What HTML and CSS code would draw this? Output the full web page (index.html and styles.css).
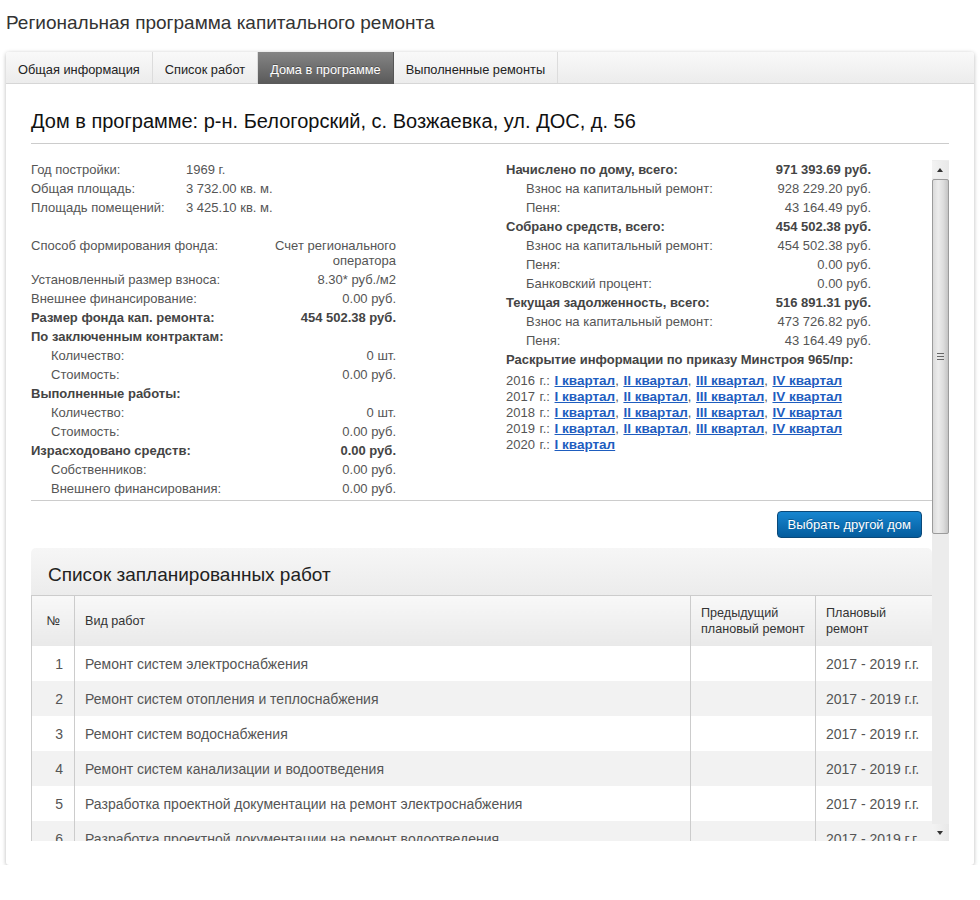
FILE: index.html
```html
<!DOCTYPE html>
<html lang="ru">
<head>
<meta charset="utf-8">
<title>Региональная программа капитального ремонта</title>
<link rel="stylesheet" href="styles.css">
</head>
<body>
<h1 class="page-title">Региональная программа капитального ремонта</h1>
<div class="card">
  <ul class="tabs">
    <li>Общая информация</li>
    <li>Список работ</li>
    <li class="active">Дома в программе</li>
    <li>Выполненные ремонты</li>
  </ul>
  <div class="card-body">
    <h2 class="house-title">Дом в программе: р-н. Белогорский, с. Возжаевка, ул. ДОС, д. 56</h2>
    <div class="scroll-box">
      <div class="scroll-content">
        <div class="info-grid">
          <div class="info-col">
            <table class="kv kv-basic">
              <tr><td class="lbl">Год постройки:</td><td>1969 г.</td></tr>
              <tr><td class="lbl">Общая площадь:</td><td>3 732.00 кв. м.</td></tr>
              <tr><td class="lbl">Площадь помещений:</td><td>3 425.10 кв. м.</td></tr>
            </table>
            <table class="kv kv-fund">
              <tr><td class="lbl">Способ формирования фонда:</td><td class="val">Счет регионального оператора</td></tr>
              <tr><td class="lbl">Установленный размер взноса:</td><td class="val">8.30* руб./м2</td></tr>
              <tr><td class="lbl">Внешнее финансирование:</td><td class="val">0.00 руб.</td></tr>
              <tr class="strong"><td class="lbl">Размер фонда кап. ремонта:</td><td class="val">454 502.38 руб.</td></tr>
              <tr class="strong"><td class="lbl" colspan="2">По заключенным контрактам:</td></tr>
              <tr><td class="lbl sub">Количество:</td><td class="val">0 шт.</td></tr>
              <tr><td class="lbl sub">Стоимость:</td><td class="val">0.00 руб.</td></tr>
              <tr class="strong"><td class="lbl" colspan="2">Выполненные работы:</td></tr>
              <tr><td class="lbl sub">Количество:</td><td class="val">0 шт.</td></tr>
              <tr><td class="lbl sub">Стоимость:</td><td class="val">0.00 руб.</td></tr>
              <tr class="strong"><td class="lbl">Израсходовано средств:</td><td class="val">0.00 руб.</td></tr>
              <tr><td class="lbl sub">Собственников:</td><td class="val">0.00 руб.</td></tr>
              <tr><td class="lbl sub">Внешнего финансирования:</td><td class="val">0.00 руб.</td></tr>
            </table>
          </div>
          <div class="info-col">
            <table class="kv kv-money">
              <tr class="strong"><td class="lbl">Начислено по дому, всего:</td><td class="val">971 393.69 руб.</td></tr>
              <tr><td class="lbl sub">Взнос на капитальный ремонт:</td><td class="val">928 229.20 руб.</td></tr>
              <tr><td class="lbl sub">Пеня:</td><td class="val">43 164.49 руб.</td></tr>
              <tr class="strong"><td class="lbl">Собрано средств, всего:</td><td class="val">454 502.38 руб.</td></tr>
              <tr><td class="lbl sub">Взнос на капитальный ремонт:</td><td class="val">454 502.38 руб.</td></tr>
              <tr><td class="lbl sub">Пеня:</td><td class="val">0.00 руб.</td></tr>
              <tr><td class="lbl sub">Банковский процент:</td><td class="val">0.00 руб.</td></tr>
              <tr class="strong"><td class="lbl">Текущая задолженность, всего:</td><td class="val">516 891.31 руб.</td></tr>
              <tr><td class="lbl sub">Взнос на капитальный ремонт:</td><td class="val">473 726.82 руб.</td></tr>
              <tr><td class="lbl sub">Пеня:</td><td class="val">43 164.49 руб.</td></tr>
            </table>
            <div class="disclosure-title">Раскрытие информации по приказу Минстроя 965/пр:</div>
            <div class="disclosure">
              <div>2016 г.: <a href="#">I квартал</a>, <a href="#">II квартал</a>, <a href="#">III квартал</a>, <a href="#">IV квартал</a></div>
              <div>2017 г.: <a href="#">I квартал</a>, <a href="#">II квартал</a>, <a href="#">III квартал</a>, <a href="#">IV квартал</a></div>
              <div>2018 г.: <a href="#">I квартал</a>, <a href="#">II квартал</a>, <a href="#">III квартал</a>, <a href="#">IV квартал</a></div>
              <div>2019 г.: <a href="#">I квартал</a>, <a href="#">II квартал</a>, <a href="#">III квартал</a>, <a href="#">IV квартал</a></div>
              <div>2020 г.: <a href="#">I квартал</a></div>
            </div>
          </div>
        </div>
        <div class="actions"><button class="btn-primary" type="button">Выбрать другой дом</button></div>
        <div class="panel">
          <div class="panel-head">Список запланированных работ</div>
          <table class="works">
            <colgroup><col class="c-num"><col class="c-name"><col class="c-prev"><col class="c-plan"></colgroup>
            <thead>
              <tr><th class="num">№</th><th>Вид работ</th><th>Предыдущий плановый ремонт</th><th>Плановый ремонт</th></tr>
            </thead>
            <tbody>
              <tr><td class="num">1</td><td>Ремонт систем электроснабжения</td><td></td><td>2017 - 2019 г.г.</td></tr>
              <tr><td class="num">2</td><td>Ремонт систем отопления и теплоснабжения</td><td></td><td>2017 - 2019 г.г.</td></tr>
              <tr><td class="num">3</td><td>Ремонт систем водоснабжения</td><td></td><td>2017 - 2019 г.г.</td></tr>
              <tr><td class="num">4</td><td>Ремонт систем канализации и водоотведения</td><td></td><td>2017 - 2019 г.г.</td></tr>
              <tr><td class="num">5</td><td>Разработка проектной документации на ремонт электроснабжения</td><td></td><td>2017 - 2019 г.г.</td></tr>
              <tr><td class="num">6</td><td>Разработка проектной документации на ремонт водоотведения</td><td></td><td>2017 - 2019 г.г.</td></tr>
              <tr><td class="num">7</td><td>Разработка проектной документации на ремонт теплоснабжения</td><td></td><td>2017 - 2019 г.г.</td></tr>
            </tbody>
          </table>
        </div>
      </div>
      <div class="scrollbar">
        <div class="sb-btn sb-up"></div>
        <div class="sb-track">
          <div class="sb-thumb"><span class="sb-grip"></span></div>
        </div>
        <div class="sb-btn sb-down"></div>
      </div>
    </div>
  </div>
</div>
</body>
</html>
```

FILE: styles.css
```css
* { box-sizing: border-box; }

html, body { background: #ffffff; }

body {
  margin: 0;
  padding: 0 6px;
  font-family: "Liberation Sans", Arial, Helvetica, sans-serif;
  color: #444;
  font-size: 13px;
}

.page-title {
  margin: 12px 0 18px;
  font-size: 19px;
  line-height: 22px;
  font-weight: normal;
  color: #333;
}

.card {
  width: 968px;
  background: #fff;
  border-radius: 3px;
  box-shadow: 0 1px 4px rgba(0, 0, 0, 0.28);
}

.tabs {
  display: flex;
  margin: 0;
  padding: 0;
  list-style: none;
  height: 32px;
  background: linear-gradient(#f9f9f9, #ececec);
  border-bottom: 1px solid #d6d6d6;
  border-radius: 3px 3px 0 0;
}

.tabs li {
  padding: 4px 12px 0;
  line-height: 27px;
  font-size: 12.8px;
  color: #222;
  border-right: 1px solid #dcdcdc;
}

.tabs li.active {
  background: linear-gradient(#858585, #595959);
  color: #fff;
  border-right-color: #555;
  text-shadow: 0 -1px 0 rgba(0, 0, 0, 0.3);
  height: 32px;
}

.card-body {
  padding: 25px 25px 24px;
}

.house-title {
  margin: 0;
  padding-bottom: 10px;
  border-bottom: 1px solid #cccccc;
  font-size: 20px;
  line-height: 24px;
  font-weight: normal;
  color: #111;
}

.scroll-box {
  display: flex;
  margin-top: 16px;
  height: 681px;
}

.scroll-content {
  flex: 1;
  overflow: hidden;
}

.info-grid {
  display: grid;
  grid-template-columns: 475px 1fr;
  padding-bottom: 2px;
  border-bottom: 1px solid #cccccc;
}

.kv {
  border-collapse: collapse;
  width: 365px;
  table-layout: fixed;
}

.kv td {
  padding: 2px 0;
  line-height: 15px;
  font-size: 13px;
  color: #555;
  vertical-align: top;
}

.kv .val { text-align: right; }
.kv .sub { padding-left: 20px; }

.kv tr.strong td {
  font-weight: bold;
  color: #444;
}

.kv-basic { margin-bottom: 19px; }
.kv-basic td.lbl { width: 155px; }
.kv-fund td.lbl { width: 242px; }
.kv-money td.lbl { width: 250px; }

.disclosure-title {
  padding: 2px 0;
  line-height: 15px;
  font-size: 13px;
  font-weight: bold;
  color: #444;
}

.disclosure {
  margin-top: 4px;
  font-size: 13px;
  line-height: 16px;
  color: #555;
  word-spacing: 1px;
}

.disclosure a {
  color: #1e5dbf;
  font-size: 13.5px;
  font-weight: bold;
  text-decoration: underline;
  word-spacing: 0;
}

.actions {
  display: flex;
  justify-content: flex-end;
  padding: 10px 10px 10px 0;
}

.btn-primary {
  height: 27px;
  padding: 0 10px;
  font-family: inherit;
  font-size: 13px;
  color: #fff;
  background: linear-gradient(#1786d0, #045c9d);
  border: 1px solid #0a4979;
  border-radius: 4px;
  text-shadow: 0 -1px 0 rgba(0, 0, 0, 0.25);
}

.panel {
  border-radius: 5px 5px 0 0;
  overflow: hidden;
}

.panel-head {
  padding: 16px 17px 9px;
  font-size: 19px;
  line-height: 22px;
  color: #222;
  background: linear-gradient(#f6f6f6, #ececec);
  border-bottom: 1px solid #cccccc;
}

.works {
  width: 901px;
  border-collapse: collapse;
  table-layout: fixed;
  border-left: 1px solid #cccccc;
  border-right: 1px solid #cccccc;
}

.works .c-num { width: 43px; }
.works .c-name { width: 616px; }
.works .c-prev { width: 125px; }
.works .c-plan { width: 117px; }

.works th {
  height: 50px;
  padding: 0 2px 0 10px;
  text-align: left;
  font-weight: normal;
  font-size: 12.6px;
  line-height: 16px;
  color: #333;
  background: linear-gradient(#f8f8f8, #e9e9e9);
  border-left: 1px solid #cccccc;
}

.works td {
  height: 35px;
  padding: 0 10px;
  font-size: 14px;
  color: #555;
  border-left: 1px solid #cccccc;
  white-space: nowrap;
}

.works .num {
  text-align: right;
  padding-right: 11px;
}

.works th.num { padding-right: 14px; }

.works tbody tr:nth-child(even) td { background: #f2f2f2; }

.scrollbar {
  width: 17px;
  display: flex;
  flex-direction: column;
  padding-top: 1px;
  background: #ededed;
}

.sb-btn {
  height: 17px;
  background: linear-gradient(to right, #f3f3f3, #e8e8e8);
  position: relative;
}

.sb-up::after,
.sb-down::after {
  content: "";
  position: absolute;
  left: 5px;
  width: 0;
  height: 0;
  border-left: 3.5px solid transparent;
  border-right: 3.5px solid transparent;
}

.sb-up::after {
  top: 7px;
  border-bottom: 4px solid #333;
}

.sb-down::after {
  top: 7px;
  border-top: 4px solid #333;
}

.sb-track {
  flex: 1;
  padding-top: 1px;
  background: #ececec;
}

.sb-thumb {
  height: 355px;
  display: flex;
  align-items: center;
  justify-content: center;
  background: linear-gradient(to right, #dadada, #ececec 35%, #dcdcdc 70%, #c4c4c4);
  border: 1px solid #9b9b9b;
  border-radius: 2px;
}

.sb-grip {
  width: 7px;
  height: 7px;
  background: repeating-linear-gradient(#666 0 1px, transparent 1px 3px);
}
```
